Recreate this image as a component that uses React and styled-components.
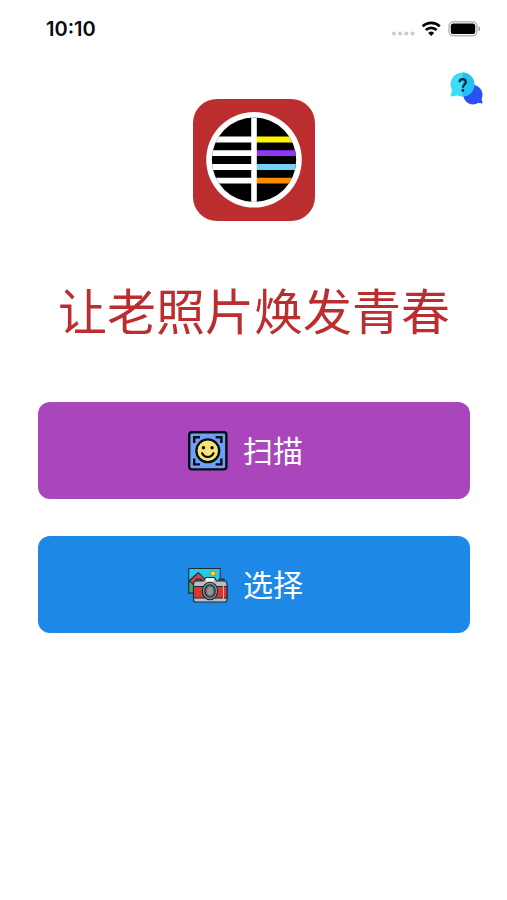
import React from "react";
import styled, { createGlobalStyle } from "styled-components";

const GlobalStyle = createGlobalStyle`
  *, *::before, *::after { box-sizing: border-box; }
  body {
    margin: 0;
    background: #ffffff;
    font-family: Inter, "Noto Sans CJK SC", sans-serif;
  }
`;

const Screen = styled.div`
  display: flex;
  flex-direction: column;
  min-height: 100vh;
`;

const StatusBar = styled.div`
  display: flex;
  align-items: center;
  justify-content: space-between;
  padding: 17px 26px 0 46px;
`;

const Clock = styled.time`
  font-size: 20px;
  line-height: 24px;
  font-weight: 600;
  color: #0b0b0b;
`;

const StatusIcons = styled.div`
  display: flex;
  align-items: center;
  gap: 6px;

  svg { display: block; }
`;

const TopBar = styled.header`
  display: flex;
  justify-content: flex-end;
  padding: 31px 24px 0;
`;

const HelpButton = styled.button`
  padding: 0;
  border: 0;
  background: none;
  cursor: pointer;

  svg { display: block; }
`;

const Content = styled.main`
  display: flex;
  flex-direction: column;
  align-items: center;
  margin-top: -6px;
  padding: 0 37px 0 38px;

  > svg { display: block; }
`;

const Title = styled.h1`
  margin: 52px 0 0;
  font-family: "Noto Sans CJK SC", sans-serif;
  font-size: 49px;
  line-height: 72px;
  font-weight: 400;
  color: #bb2d2f;
  white-space: nowrap;
`;

const Actions = styled.div`
  display: flex;
  flex-direction: column;
  gap: 37px;
  width: 100%;
  margin-top: 57px;
`;

const ActionButton = styled.button`
  display: flex;
  align-items: center;
  justify-content: center;
  gap: 15px;
  width: 100%;
  height: 97px;
  padding: 0 17px 0 0;
  border: 0;
  border-radius: 12px;
  background: ${({ $color }) => $color};
  color: #ffffff;
  font-family: "Noto Sans CJK SC", sans-serif;
  font-size: 30px;
  line-height: 44px;
  font-weight: 400;
  cursor: pointer;

  svg { display: block; flex: none; }
`;

const ActionLabel = styled.span`
  padding-bottom: 4px;
`;

const SignalIcon = () => (
  <svg width="24" height="16" viewBox="0 0 24 16" fill="#cbcbcd" aria-hidden="true">
    <circle cx="2" cy="12.5" r="2" />
    <circle cx="8" cy="12.5" r="2" />
    <circle cx="14.3" cy="12.5" r="2" />
    <circle cx="20.5" cy="12.5" r="2" />
  </svg>
);

const WifiIcon = () => (
  <svg width="20" height="16" viewBox="0 0 20 16" aria-hidden="true">
    <g fill="none" stroke="#050505" strokeWidth="2.7">
      <path d="M.6 5.4a12.4 12.4 0 0 1 17.2 0" />
      <path d="M3.8 9a7.8 7.8 0 0 1 10.8 0" />
    </g>
    <path d="M9.2 15l-3-3a4.3 4.3 0 0 1 6 0z" fill="#050505" />
  </svg>
);

const BatteryIcon = () => (
  <svg width="33" height="16" viewBox="0 0 33 16" aria-hidden="true">
    <rect x="1" y="0.8" width="28" height="14" rx="4.5" fill="#fff" stroke="#b5b5b5" strokeWidth="1.4" />
    <rect x="2.8" y="2.6" width="24.4" height="10.4" rx="2.6" fill="#000" />
    <path d="M30.5 5.3c2.2.8 2.2 4.2 0 5z" fill="#999" />
  </svg>
);

const HelpIcon = () => (
  <svg width="34" height="33" viewBox="0 0 34 33" aria-hidden="true">
    <path d="M24 13a9.7 9.7 0 0 1 8.6 13.7l1 4.9-4.6-.6A9.7 9.7 0 1 1 24 13z" fill="#2b50f3" />
    <path d="M13.500 0.500a12 12 0 1 1-4.800 23.100L1.500 24.500l1.500-6.200A12 12 0 0 1 13.500 .5z" fill="#3edcfb" />
    <path d="M13.500 .5a12 12 0 1 1 0 24z" fill="#20c1f5" />
    <path d="M10.600 10.300c0-4.200 6.200-4 6.200-.2 0 2.600-3 2.700-3 5.600" fill="none" stroke="#07252f" strokeWidth="2.2" />
    <circle cx="13.8" cy="18.4" r="1.4" fill="#07252f" />
  </svg>
);

const Logo = () => (
  <svg width="122" height="122" viewBox="0 0 122 122" role="img" aria-label="logo">
    <defs>
      <clipPath id="logo-disc">
        <circle cx="61" cy="60.8" r="42.2" />
      </clipPath>
    </defs>
    <rect width="122" height="122" rx="24" fill="#bb2d2f" />
    <circle cx="61" cy="60.8" r="47.8" fill="#fff" />
    <g clipPath="url(#logo-disc)">
      <rect x="18" y="18" width="86" height="88" fill="#000" />
      <path d="M18 37.600h43v5.800H18zM18 51.300h43v5.800H18zM18 65.100h43v5.800H18zM18 78.800h43v5.800H18z" fill="#fff" />
      <path d="M61 37.600h43v5.800H61z" fill="#fff500" />
      <path d="M61 51.300h43v5.800H61z" fill="#9136fa" />
      <path d="M61 65.100h43v5.800H61z" fill="#72d2f8" />
      <path d="M61 78.800h43v5.800H61z" fill="#ff8c00" />
      <rect x="58.2" y="18" width="5.6" height="88" fill="#fff" />
    </g>
  </svg>
);

const ScanIcon = () => (
  <svg width="40" height="40" viewBox="0 0 40 40" aria-hidden="true">
    <rect x="1.2" y="1.2" width="37.2" height="37.2" rx="2.6" fill="#6ca1f7" stroke="#070b12" strokeWidth="2.4" />
    <path d="M6.2 12V6.200H12M27.600 6.200h5.800V12M33.400 27.600v5.800h-5.800M12 33.400H6.200v-5.800" fill="none" stroke="#070b12" strokeWidth="2.4" />
    <circle cx="19.8" cy="19.8" r="11.4" fill="#f8e475" stroke="#070b12" strokeWidth="2.3" />
    <circle cx="15.5" cy="16.8" r="1.7" fill="#070b12" />
    <circle cx="24.1" cy="16.8" r="1.7" fill="#070b12" />
    <path d="M14.100 22.100c2 5 9.400 5 11.400 0" fill="none" stroke="#070b12" strokeWidth="2.1" strokeLinecap="round" />
  </svg>
);

const CameraIcon = () => (
  <svg width="40" height="40" viewBox="0 0 40 40" aria-hidden="true">
    <g stroke="#202a33" strokeWidth="1.1" strokeLinejoin="round">
      <rect x="0.700" y="3.500" width="31.600" height="24.500" fill="#21cbed" />
      <path d="M.7 17l6-6 12 17H.7z" fill="#42a565" />
      <path d="M1.500 15.500L10.500 7.500l12 13H6z" fill="#c94549" />
      <circle cx="25" cy="8.500" r="2.500" fill="#ffdc35" stroke="#9a9b35" />
      <path d="M8 17v-3h5v3M31 17v-3h5v3" fill="#555c62" />
      <path d="M5.500 19q0-3 3-3h7l2-3.500h9l2 3.500h7.500q3 0 3 3v16q0 2-2 2h-29.500q-2 0-2-2z" fill="#b8bdc1" />
      <path d="M5.500 21.500H39v11.500H5.500z" fill="#dc3535" />
      <path d="M18 13h8v3.500h-8z" fill="#f5f5f5" stroke="none" />
      <ellipse cx="22" cy="26" rx="7.700" ry="8.700" fill="#888f94" />
      <ellipse cx="22" cy="26" rx="5.200" ry="6.200" fill="#666e74" />
    </g>
    <ellipse cx="22" cy="26" rx="3" ry="4" fill="#92989c" />
    <path d="M35.500 20v14" stroke="#efaaa8" strokeWidth="1" />
  </svg>
);

export default function App() {
  return (
    <>
      <GlobalStyle />
      <Screen>
        <StatusBar>
          <Clock>10:10</Clock>
          <StatusIcons>
            <SignalIcon />
            <WifiIcon />
            <BatteryIcon />
          </StatusIcons>
        </StatusBar>
        <TopBar>
          <HelpButton type="button" aria-label="帮助">
            <HelpIcon />
          </HelpButton>
        </TopBar>
        <Content>
          <Logo />
          <Title>让老照片焕发青春</Title>
          <Actions>
            <ActionButton type="button" $color="#aa46bb">
              <ScanIcon />
              <ActionLabel>扫描</ActionLabel>
            </ActionButton>
            <ActionButton type="button" $color="#1e88e6">
              <CameraIcon />
              <ActionLabel>选择</ActionLabel>
            </ActionButton>
          </Actions>
        </Content>
      </Screen>
    </>
  );
}
